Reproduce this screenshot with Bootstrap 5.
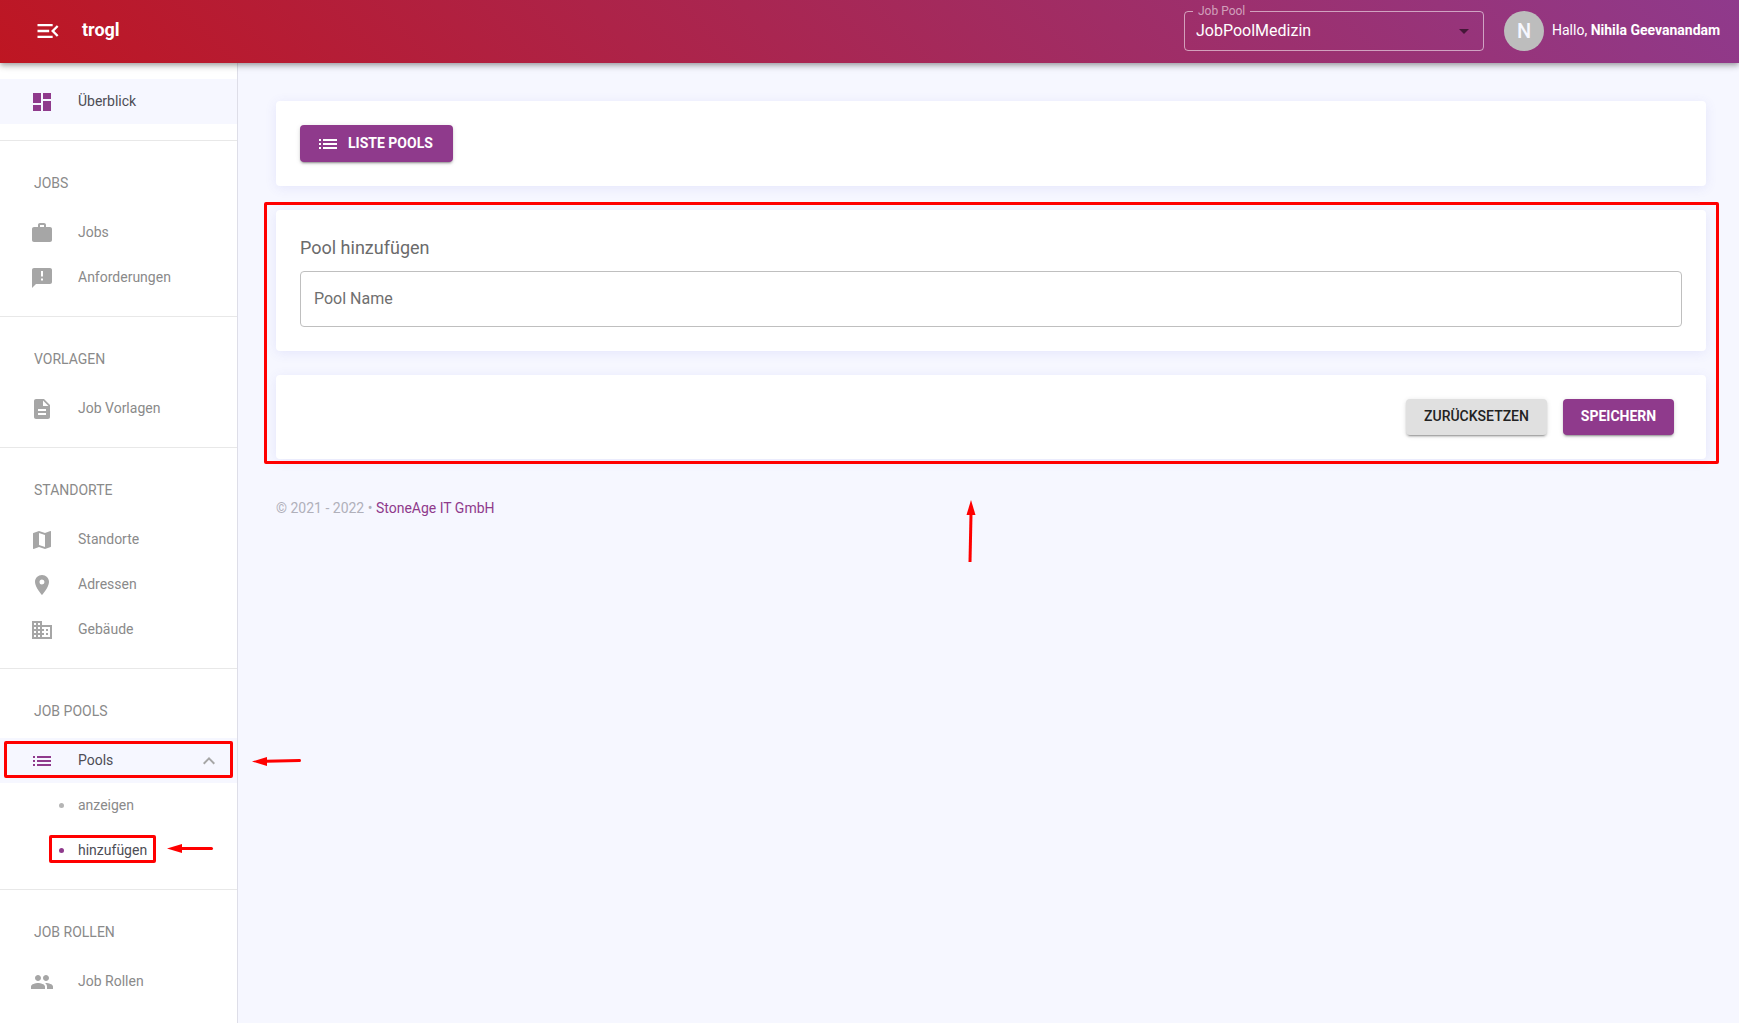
<!DOCTYPE html>
<html lang="de">
<head>
<meta charset="utf-8">
<meta name="viewport" content="width=device-width, initial-scale=1">
<title>trogl – Pool hinzufügen</title>
<link href="https://cdn.jsdelivr.net/npm/bootstrap@5.3.0/dist/css/bootstrap.min.css" rel="stylesheet">
<style>
:root{--brand:#8f3a8c;--canvas:#f6f7ff;--mute:#8a8a8a;--mark:#f00}
body{font-family:Roboto,"Liberation Sans",sans-serif;font-size:14px;line-height:20px;background:var(--canvas);color:#4d4d55}
svg{display:block;fill:currentColor;flex:none}
.topbar{height:63px;background:linear-gradient(45deg,#be1622,#8f3a8c);box-shadow:0 2px 4px -1px rgba(0,0,0,.2),0 4px 5px rgba(0,0,0,.14),0 1px 10px rgba(0,0,0,.12);z-index:1030;padding:0 15px 1px 34px}
.brandname{font-size:18px;font-weight:700;line-height:24px;margin-left:20px;padding-bottom:2px}
.poolfield{width:300px;height:40px}
.poolfield fieldset{position:absolute;inset:-8px 0 0;border:1px solid rgba(255,255,255,.55);border-radius:4px;padding:0 8px;pointer-events:none}
.poolfield legend{float:none;width:auto;margin:0;padding:0 5px;font-size:12px;line-height:16px;color:rgba(255,255,255,.55)}
.poolfield select{appearance:none;width:100%;height:40px;border:0;background:transparent;color:#fff;font-size:16px;padding:0 32px 0 12px}
.poolfield option{color:#222}
.poolfield svg{position:absolute;right:8px;top:8px;color:rgba(0,0,0,.54);pointer-events:none}
.face{width:40px;height:40px;background:#bdbdbd;color:#f6f7ff;font-size:20px;font-weight:500;margin:0 8px 0 20px}
.hello{min-width:172px;padding-bottom:2px}
.sidenav{width:238px;border-right:1px solid #dedee8;background:#fff;padding-top:16px}
.navrow{height:45px;padding:0 16px 0 30px;color:var(--mute);text-decoration:none;background:none;border:0;width:100%;text-align:left}
.navrow svg{color:#a6a6a6}
.navrow .cap{margin-left:24px;padding-bottom:2px}
.navrow.on{background:var(--canvas)}
.navrow.on,.navrow.here{color:#4d4d55}
.navrow.on .lead-icon{color:var(--brand)}
.navrow.sub{padding-left:59px}
.navrow.sub .cap{margin-left:14px}
.pip{width:5px;height:5px;border-radius:50%;background:#b5b5b5}
.here .pip{background:var(--brand)}
.grp{border-top:1px solid #e8e8e8;margin-top:16px;padding-top:32px}
.grp h2{font-size:14px;font-weight:400;line-height:20px;color:var(--mute);margin:0;padding:0 34px 17px}
.content{padding:38px 33px 24px 38px}
.panel{background:#fff;border-radius:4px;padding:24px;box-shadow:0 2px 12px rgba(80,80,220,.1)}
.act{font-size:14px;font-weight:700;line-height:20px;border:0;border-radius:4px;height:36px;padding:0 16px 2px;box-shadow:0 3px 1px -2px rgba(0,0,0,.2),0 2px 2px rgba(0,0,0,.14),0 1px 5px rgba(0,0,0,.12)}
.act-main,.act-main:hover{background:var(--brand);color:#fff}
.act-soft,.act-soft:hover{background:#e0e0e0;color:#222;font-weight:500}
.act-list{height:37px;min-width:153px;padding-bottom:0}
.act-list span{padding-bottom:2px}
.act-reset{min-width:141px}
.act-save{min-width:111px}
.formhead{font-size:18px;font-weight:400;line-height:28px;margin:0 0 9px;color:#6b6b6b}
.namebox{height:56px;border:1px solid #bfbfbf;border-radius:4px;font-size:16px;padding:0 13px 2px}
.namebox::placeholder{color:#6f6f6f;opacity:1}
.foot{color:#b0b0ba;margin-top:39px}
.foot a{color:var(--brand);text-decoration:none}
.frame{position:absolute;border:3px solid var(--mark);border-radius:2px;pointer-events:none}
.frame-form{inset:-8px -13px -5px -12px}
.frame-pools{inset:3px 4px 5px}
.frame-add{left:49px;width:107px;top:7px;height:28px}
.arrow{position:absolute;color:var(--mark);pointer-events:none}
.arrow-pools{left:252px;top:18px}
.arrow-add{left:167px;top:16px}
.arrow-form{left:50%;top:calc(100% + 41px);margin-left:-25px}
</style>
</head>
<body class="d-flex flex-column min-vh-100">
<header class="topbar sticky-top d-flex align-items-center text-white">
  <button class="btn p-0 border-0 text-white" type="button" aria-label="Menü"><svg width="28" height="28" viewBox="0 0 24 24"><path d="M3 18h13v-2H3v2zM3 13h10v-2H3v2zm0-7v2h13V6H3zm18 9.590-3.580-3.590L21 8.410 19.590 7l-5 5 5 5L21 15.590z"/></svg></button>
  <a class="brandname text-white text-decoration-none me-auto" href="#">trogl</a>
  <div class="poolfield position-relative">
    <fieldset aria-hidden="true"><legend>Job Pool</legend></fieldset>
    <select aria-label="Job Pool"><option>JobPoolMedizin</option></select>
    <svg width="24" height="24" viewBox="0 0 24 24"><path d="M7 10l5 5 5-5z"/></svg>
  </div>
  <div class="face rounded-circle d-flex align-items-center justify-content-center">N</div>
  <span class="hello">Hallo, <strong>Nihila Geevanandam</strong></span>
</header>
<div class="d-flex flex-grow-1">
  <nav class="sidenav flex-shrink-0" aria-label="Hauptmenü">
    <a class="navrow on d-flex align-items-center" href="#"><svg class="lead-icon" width="24" height="24" viewBox="0 0 24 24"><path d="M3 13h8V3H3v10zm0 8h8v-6H3v6zm10 0h8V11h-8v10zm0-18v6h8V3h-8z"/></svg><span class="cap">Überblick</span></a>
    <section class="grp"><h2>JOBS</h2>
      <a class="navrow d-flex align-items-center" href="#"><svg width="24" height="24" viewBox="0 0 24 24"><path d="M20 6h-4V4c0-1.110-.89-2-2-2h-4c-1.110 0-2 .89-2 2v2H4c-1.110 0-1.990.89-1.990 2L2 19c0 1.110.89 2 2 2h16c1.110 0 2-.89 2-2V8c0-1.110-.89-2-2-2zm-6 0h-4V4h4v2z"/></svg><span class="cap">Jobs</span></a>
      <a class="navrow d-flex align-items-center" href="#"><svg width="24" height="24" viewBox="0 0 24 24"><path d="M20 2H4c-1.100 0-1.990.9-1.990 2L2 22l4-4h14c1.100 0 2-.9 2-2V4c0-1.100-.9-2-2-2zm-7 12.500h-2v-2h2v2zm0-4h-2V5h2v5.500z"/></svg><span class="cap">Anforderungen</span></a>
    </section>
    <section class="grp"><h2>VORLAGEN</h2>
      <a class="navrow d-flex align-items-center" href="#"><svg width="24" height="24" viewBox="0 0 24 24"><path d="M14 2H6c-1.100 0-1.990.9-1.990 2L4 20c0 1.100.89 2 1.990 2H18c1.100 0 2-.9 2-2V8l-6-6zm2 16H8v-2h8v2zm0-4H8v-2h8v2zm-3-5V3.500L18.500 9H13z"/></svg><span class="cap">Job Vorlagen</span></a>
    </section>
    <section class="grp"><h2>STANDORTE</h2>
      <a class="navrow d-flex align-items-center" href="#"><svg width="24" height="24" viewBox="0 0 24 24"><path d="M20.500 3l-.16.030L15 5.100 9 3 3.360 4.900c-.21.070-.36.250-.36.480V20.500c0 .28.220.5.500.5l.16-.03L9 18.900l6 2.100 5.640-1.900c.21-.07.360-.25.360-.48V3.500c0-.28-.22-.5-.5-.5zM15 19l-6-2.110V5l6 2.110V19z"/></svg><span class="cap">Standorte</span></a>
      <a class="navrow d-flex align-items-center" href="#"><svg width="24" height="24" viewBox="0 0 24 24"><path d="M12 2C8.130 2 5 5.130 5 9c0 5.250 7 13 7 13s7-7.750 7-13c0-3.870-3.130-7-7-7zm0 9.500a2.500 2.500 0 1 1 0-5 2.500 2.500 0 0 1 0 5z"/></svg><span class="cap">Adressen</span></a>
      <a class="navrow d-flex align-items-center" href="#"><svg width="24" height="24" viewBox="0 0 24 24"><path d="M12 7V3H2v18h20V7H12zM6 19H4v-2h2v2zm0-4H4v-2h2v2zm0-4H4V9h2v2zm0-4H4V5h2v2zm4 12H8v-2h2v2zm0-4H8v-2h2v2zm0-4H8V9h2v2zm0-4H8V5h2v2zm10 12h-8v-2h2v-2h-2v-2h2v-2h-2V9h8v10zm-2-8h-2v2h2v-2zm0 4h-2v2h2v-2z"/></svg><span class="cap">Gebäude</span></a>
    </section>
    <section class="grp"><h2>JOB POOLS</h2>
      <div class="position-relative">
        <button class="navrow on d-flex align-items-center" type="button" aria-expanded="true"><svg class="lead-icon" width="24" height="24" viewBox="0 0 24 24"><path d="M3 13h2v-2H3v2zm0 4h2v-2H3v2zm0-8h2V7H3v2zm4 4h14v-2H7v2zm0 4h14v-2H7v2zM7 7v2h14V7H7z"/></svg><span class="cap me-auto">Pools</span><svg width="24" height="24" viewBox="0 0 24 24"><path d="M12 8l-6 6 1.410 1.410L12 10.830l4.590 4.580L18 14z"/></svg></button>
        <span class="frame frame-pools"></span>
        <svg class="arrow arrow-pools" width="50" height="10" viewBox="0 0 50 10"><path d="M0 5.500 15 1v9z"/><path d="M14 5.300 47.500 4.500" stroke="currentColor" stroke-width="3" stroke-linecap="round"/></svg>
      </div>
      <a class="navrow sub d-flex align-items-center" href="#"><span class="pip"></span><span class="cap">anzeigen</span></a>
      <div class="position-relative">
        <a class="navrow sub here d-flex align-items-center" href="#"><span class="pip"></span><span class="cap">hinzufügen</span></a>
        <span class="frame frame-add"></span>
        <svg class="arrow arrow-add" width="50" height="10" viewBox="0 0 50 10"><path d="M0 4.500 15 0v9z"/><path d="M14 4.500H44.500" stroke="currentColor" stroke-width="3" stroke-linecap="round"/></svg>
      </div>
    </section>
    <section class="grp"><h2>JOB ROLLEN</h2>
      <a class="navrow d-flex align-items-center" href="#"><svg width="24" height="24" viewBox="0 0 24 24"><path d="M16 11c1.660 0 2.990-1.340 2.990-3S17.660 5 16 5s-3 1.340-3 3 1.340 3 3 3zm-8 0c1.660 0 2.990-1.340 2.990-3S9.660 5 8 5 5 6.340 5 8s1.340 3 3 3zm0 2c-2.330 0-7 1.170-7 3.500V19h14v-2.500c0-2.330-4.670-3.500-7-3.500zm8 0c-.29 0-.62.020-.97.050 1.160.84 1.970 1.970 1.970 3.450V19h6v-2.500c0-2.330-4.670-3.500-7-3.500z"/></svg><span class="cap">Job Rollen</span></a>
    </section>
  </nav>
  <main class="content flex-grow-1">
    <div class="panel d-flex mb-4"><button class="btn act act-main act-list d-flex align-items-center gap-2" type="button"><svg width="24" height="24" viewBox="0 0 24 24"><path d="M3 13h2v-2H3v2zm0 4h2v-2H3v2zm0-8h2V7H3v2zm4 4h14v-2H7v2zm0 4h14v-2H7v2zM7 7v2h14V7H7z"/></svg><span>LISTE POOLS</span></button></div>
    <form class="position-relative">
      <div class="panel mb-4">
        <h1 class="formhead">Pool hinzufügen</h1>
        <input class="form-control namebox" type="text" placeholder="Pool Name" aria-label="Pool Name">
      </div>
      <div class="panel d-flex justify-content-end gap-3 pe-2">
        <button class="btn act act-soft act-reset" type="reset">ZURÜCKSETZEN</button>
        <button class="btn act act-main act-save me-4" type="submit">SPEICHERN</button>
      </div>
      <span class="frame frame-form"></span>
      <svg class="arrow arrow-form" width="10" height="64" viewBox="0 0 10 64"><path d="M5 0 9.500 15H.5z"/><path d="M5 14 4 62" stroke="currentColor" stroke-width="3"/></svg>
    </form>
    <footer class="foot">© 2021 - 2022 • <a href="#">StoneAge IT GmbH</a></footer>
  </main>
</div>
<script src="https://cdn.jsdelivr.net/npm/bootstrap@5.3.0/dist/js/bootstrap.bundle.min.js"></script>
</body>
</html>
